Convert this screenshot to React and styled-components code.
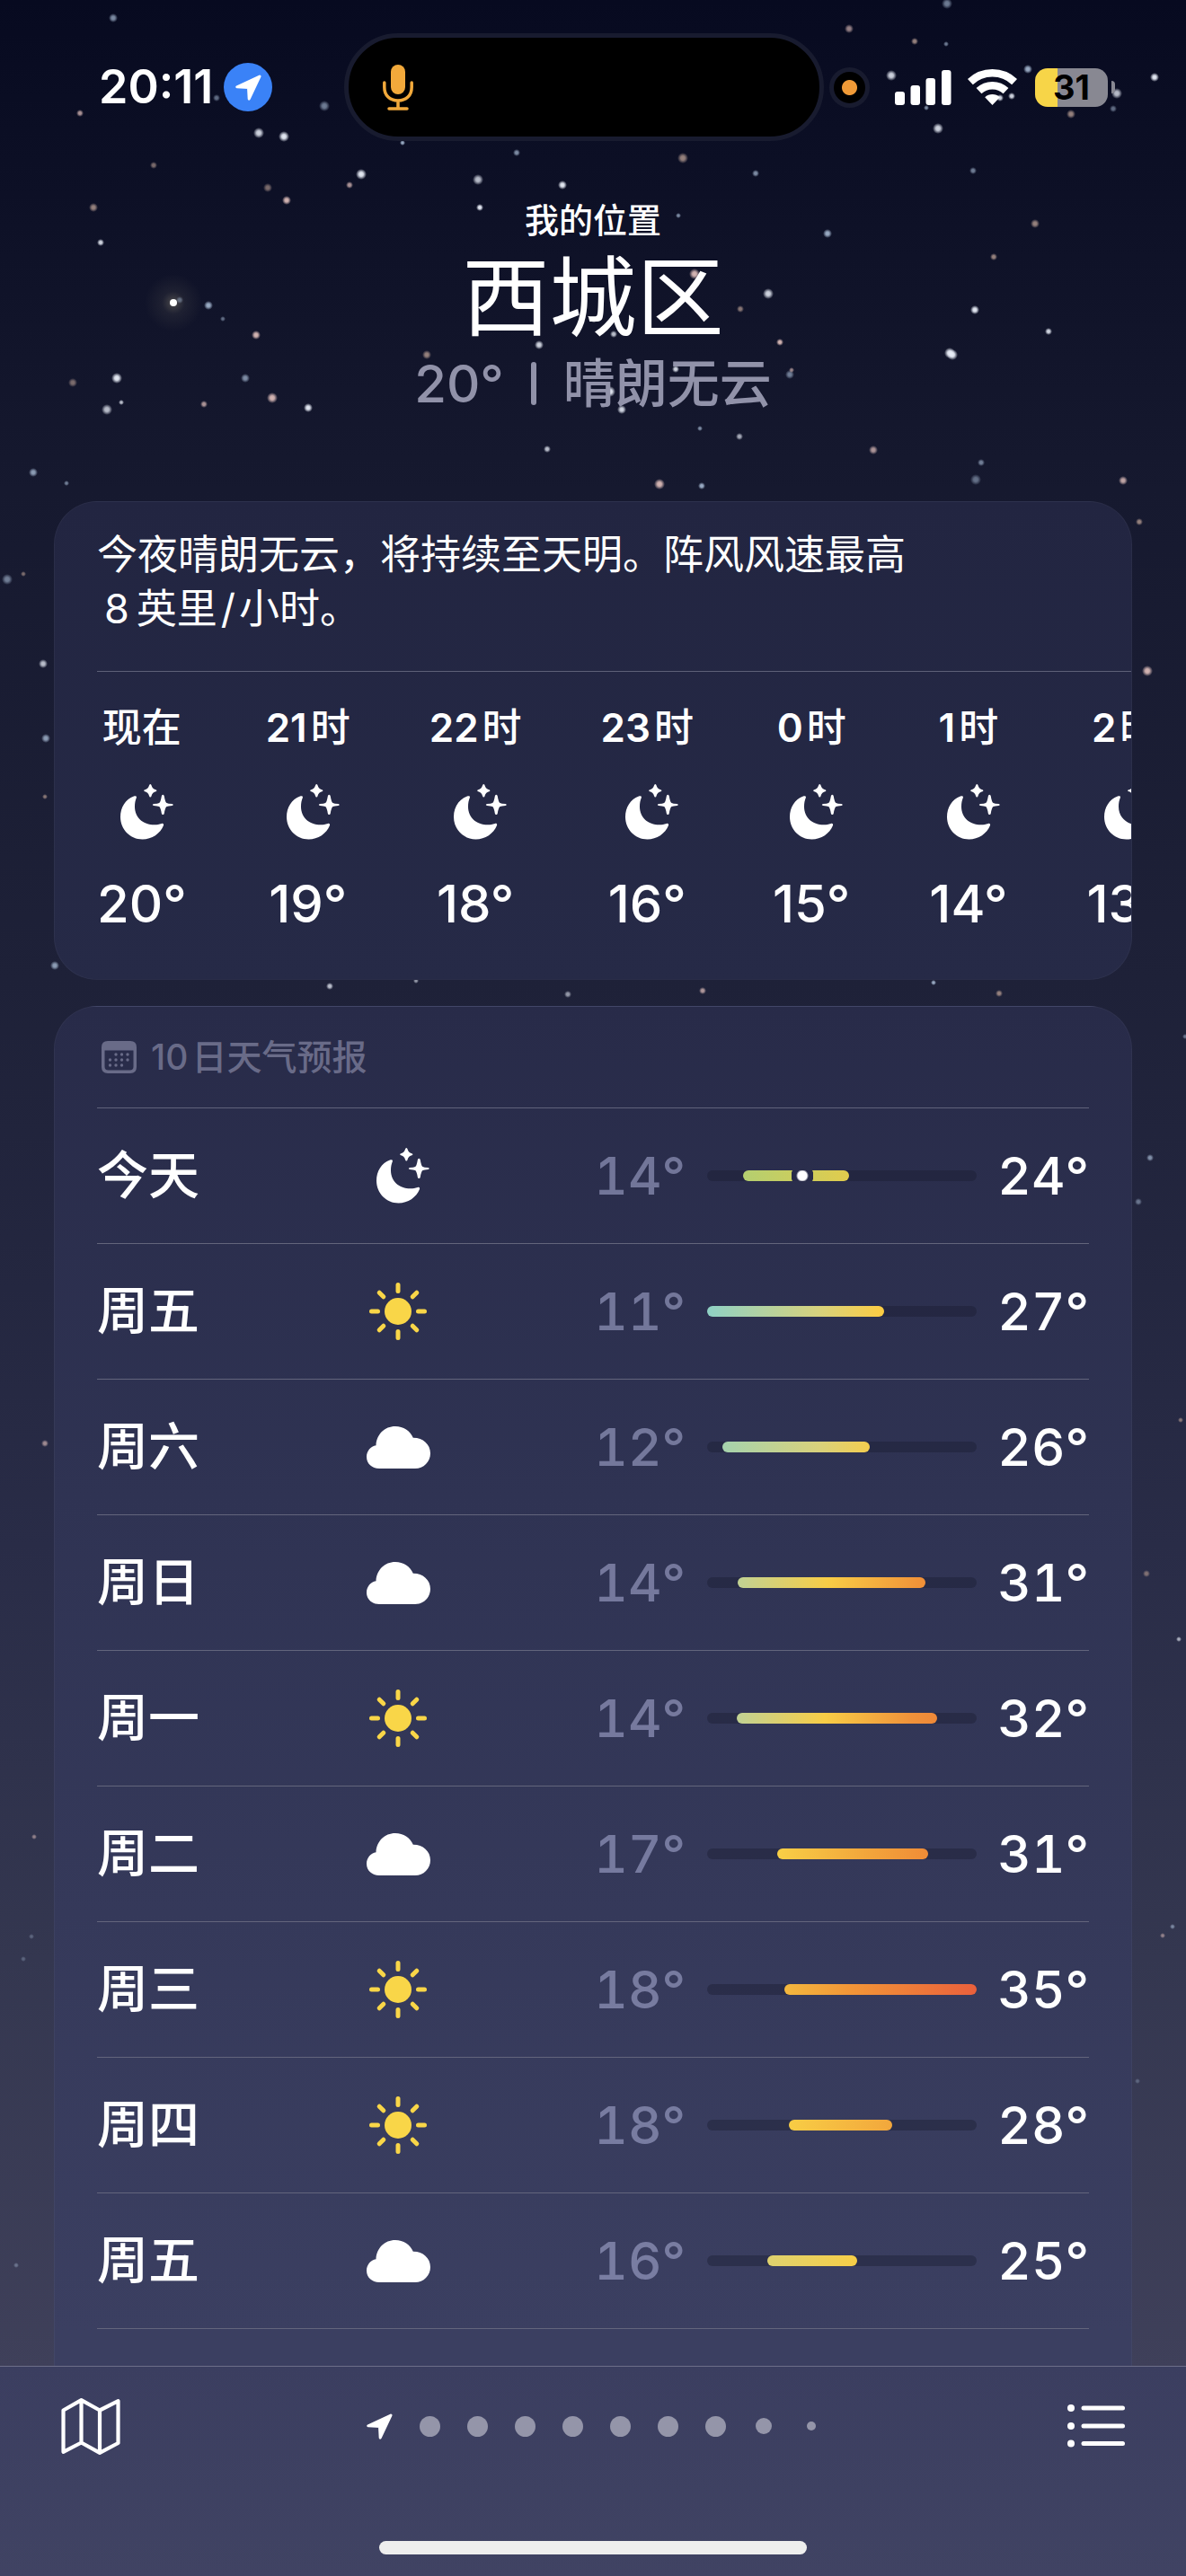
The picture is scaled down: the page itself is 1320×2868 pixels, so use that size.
import styled, { createGlobalStyle } from "styled-components";

const GlobalStyle = createGlobalStyle`
  * {
    box-sizing: border-box;
  }

  body {
    margin: 0;
    background-color: #0f1228;
    color: #ffffff;
    font-family: Inter, "Noto Sans CJK SC", sans-serif;
  }

  h1, h2, p, ul {
    margin: 0;
    padding: 0;
    font-weight: inherit;
    font-size: inherit;
  }

  ul {
    list-style: none;
  }

  svg {
    display: block;
  }
`;

const Screen = styled.div`
  position: relative;
  height: 100vh;
  display: flex;
  flex-direction: column;
  overflow: hidden;
  background: linear-gradient(
    #070a20 0%,
    #0f1228 10%,
    #16192f 19%,
    #1e2138 38%,
    #292c47 60%,
    #343750 76%,
    #3f405a 92%
  );
`;

const Sky = styled.svg`
  position: absolute;
  top: 0;
  left: 0;
  width: 100%;
  height: 100%;
`;

const StatusBar = styled.div`
  position: relative;
  display: grid;
  grid-template-columns: 273px 1fr 45px 273px;
  align-items: center;
  padding: 37px 79px 0 110px;
`;

const Clock = styled.div`
  display: flex;
  align-items: center;
  gap: 12px;
  font-size: 52px;
  line-height: 60px;
  font-weight: 600;
`;

const LocationBadge = styled.span`
  width: 54px;
  height: 54px;
  border-radius: 50%;
  background-color: #3a82f7;
  display: flex;
  align-items: center;
  justify-content: center;
`;

const Island = styled.div`
  height: 120px;
  margin-right: 6px;
  padding-left: 38px;
  border: 5px solid #181b2f;
  border-radius: 60px;
  background-color: #000000;
  display: flex;
  align-items: center;
`;

const MicDot = styled.div`
  width: 45px;
  height: 45px;
  border: 5px solid #181b2f;
  border-radius: 50%;
  background: radial-gradient(circle, #f09a37 8px, #000000 9px);
`;

const StatusIcons = styled.div`
  display: flex;
  align-items: center;
  justify-content: flex-end;
`;

const Battery = styled.div`
  width: 81px;
  height: 43px;
  margin: 0 4px 0 20px;
  border-radius: 14px;
  background: linear-gradient(90deg, #f7d548 31%, #888892 31%);
  color: #000000;
  font-size: 38px;
  line-height: 43px;
  font-weight: 700;
  text-align: center;
`;

const BatteryCap = styled.span`
  width: 4px;
  height: 14px;
  border-radius: 0 4px 4px 0;
  background-color: #888892;
`;

const Content = styled.main`
  position: relative;
  flex: 1;
  min-height: 0;
  overflow: hidden;
  padding: 0 60px;
`;

const Header = styled.header`
  padding: 64px 0 97px;
  text-align: center;
`;

const Place = styled.p`
  font-size: 38px;
  line-height: 48px;
  font-weight: 500;
`;

const City = styled.h1`
  font-size: 97px;
  line-height: 124px;
  font-weight: 400;
`;

const Current = styled.p`
  display: flex;
  align-items: center;
  justify-content: center;
  font-size: 58px;
  line-height: 68px;
  font-weight: 500;
  color: #9192a9;
`;

const Divider = styled.span`
  width: 6px;
  height: 48px;
  margin: 0 30px;
  border-radius: 3px;
  background-color: #9192a9;
`;

const Card = styled.section`
  border: 1px solid rgba(255, 255, 255, 0.04);
  border-radius: 48px;
  overflow: hidden;
`;

const HourlyCard = styled(Card)`
  padding-left: 47px;
  background: linear-gradient(#222541, #262a47);
`;

const DailyCard = styled(Card)`
  margin-top: 29px;
  padding: 0 47px 80px;
  border-radius: 48px 48px 0 0;
  background: linear-gradient(#282b49, #2f3353 35%, #3b3f61 95%);
`;

const Summary = styled.p`
  padding: 29px 230px 39px 0;
  border-bottom: 1px solid #5d6077;
  font-size: 45px;
  line-height: 60px;
`;

const Speed = styled.span`
  margin: 0 8px;
`;

const Slash = styled.span`
  margin: 0 4px;
`;

const Hours = styled.ul`
  display: flex;
  gap: 88px;
  padding: 32px 0 52px;
`;

const Hour = styled.li`
  flex: none;
  display: flex;
  flex-direction: column;
  align-items: center;
`;

const HourLabel = styled.span`
  display: flex;
  align-items: baseline;
  gap: 4px;
  height: 60px;
  font-size: 44px;
  line-height: 60px;
  font-weight: 600;
`;

const HourUnit = styled.span`
  font-weight: 500;
`;

const HourIcon = styled.span`
  padding: 33px 0 39px;
`;

const HourTemp = styled.span`
  font-size: 58px;
  line-height: 64px;
  font-weight: 500;
`;

const DailyTitle = styled.h2`
  display: flex;
  align-items: center;
  gap: 16px;
  height: 113px;
  padding-left: 5px;
  border-bottom: 1px solid #60627a;
  font-size: 39px;
  line-height: 48px;
  font-weight: 500;
  color: #696b88;
`;

const TitleText = styled.span`
  display: flex;
  align-items: baseline;
  gap: 4px;
  height: 48px;
`;

const Day = styled.li`
  display: grid;
  grid-template-columns: 299px 72px 1fr 300px 125px;
  align-items: center;
  height: 151px;
  border-bottom: 1px solid #63657c;
  font-weight: 500;
`;

const DayName = styled.span`
  font-size: 57px;
  line-height: 64px;
`;

const DayIcon = styled.span`
  display: flex;
  justify-content: center;
`;

const Temp = styled.span`
  font-size: 58px;
  line-height: 64px;
  font-variant-numeric: tabular-nums;
  text-align: right;
`;

const LowTemp = styled(Temp)`
  padding-right: 24px;
  color: rgba(176, 180, 218, 0.54);
`;

const Track = styled.div`
  position: relative;
  height: 12px;
  border-radius: 6px;
  background-color: rgba(25, 27, 48, 0.4);
`;

const Range = styled.div`
  height: 12px;
  border-radius: 6px;
  background: linear-gradient(90deg, ${({ $colors }) => $colors});
`;

const NowMark = styled.span`
  position: absolute;
  top: 0;
  width: 24px;
  height: 12px;
  margin-left: -12px;
  background: radial-gradient(circle, #ffffff 5px, #282b49 7px, #282b49 12px, transparent 13px);
`;

const Toolbar = styled.footer`
  position: relative;
  flex: none;
  border-top: 1px solid #6c6e88;
  background: linear-gradient(#3b3e60, #404363);
`;

const Tabs = styled.nav`
  display: flex;
  align-items: center;
  justify-content: space-between;
  height: 132px;
  padding: 0 68px;
`;

const IconButton = styled.button`
  padding: 0;
  border: 0;
  background: none;
  color: #ffffff;
  cursor: pointer;
`;

const Pages = styled.div`
  display: flex;
  align-items: center;
  gap: 30px;
`;

const PageSlot = styled.span`
  width: 23px;
  display: flex;
  justify-content: center;
`;

const PageDot = styled.span`
  width: ${({ $size }) => $size}px;
  height: ${({ $size }) => $size}px;
  border-radius: 50%;
  background-color: #9495a9;
`;

const HomeBar = styled.div`
  width: 36%;
  height: 15px;
  margin: 62px auto 24px;
  border-radius: 8px;
  background-color: #eeeeee;
`;

const white = "#e9eef8";
const blue = "#9dafc8";
const rose = "#d9b9b6";
const brown = "#9a8580";

// x, y, radius, colour, opacity
const stars = [
  [126, 20, 4, blue, 0.8], [89, 126, 3, rose, 0.8], [241, 109, 3, blue, 0.6], [361, 118, 5, blue, 0.7],
  [288, 148, 5, white, 0.9], [316, 152, 5, white, 1], [171, 184, 3, brown, 0.8], [402, 194, 5, white, 1],
  [389, 206, 3, rose, 0.8], [298, 209, 4, brown, 0.8], [319, 223, 4, rose, 1], [104, 231, 4, brown, 1],
  [112, 270, 3, white, 0.9], [200, 334, 3, blue, 0.5], [232, 340, 4, blue, 1], [248, 355, 2, blue, 0.6],
  [285, 373, 4, rose, 1], [475, 395, 4, brown, 1], [81, 426, 4, brown, 0.8], [130, 421, 5, white, 1],
  [119, 456, 5, white, 0.8], [135, 448, 2, white, 0.8], [227, 450, 3, rose, 0.8], [273, 421, 4, blue, 0.8],
  [303, 443, 5, rose, 1], [343, 454, 4, white, 1], [37, 526, 4, blue, 0.9], [74, 538, 2, blue, 0.7],
  [448, 159, 2, blue, 1], [575, 170, 3, blue, 0.8], [532, 200, 5, white, 0.8], [626, 206, 4, white, 1],
  [534, 231, 3, white, 1], [600, 384, 4, white, 0.9], [609, 500, 3, white, 0.8], [418, 46, 2, blue, 0.8],
  [1054, 4, 5, blue, 0.7], [945, 32, 4, rose, 0.7], [1018, 46, 3, brown, 1], [1053, 49, 2, blue, 0.7],
  [992, 84, 5, white, 0.9], [1144, 77, 4, blue, 1], [1126, 107, 3, white, 0.9], [1113, 109, 3, white, 0.9],
  [1031, 120, 2, blue, 0.8], [1285, 86, 4, white, 1], [1243, 104, 5, white, 0.8], [1239, 121, 3, blue, 0.6],
  [1192, 127, 4, brown, 1], [1044, 143, 5, white, 0.9], [760, 176, 5, brown, 1], [841, 193, 3, blue, 0.8],
  [1083, 190, 3, blue, 0.7], [755, 240, 2, blue, 0.8], [921, 260, 4, blue, 1], [1152, 249, 4, brown, 1],
  [1106, 286, 3, brown, 1], [773, 305, 5, rose, 1], [855, 327, 5, white, 0.9], [824, 344, 3, brown, 0.9],
  [1085, 345, 4, white, 1], [1167, 369, 3, white, 0.9], [868, 381, 3, rose, 1], [1057, 393, 5, white, 1],
  [1060, 395, 5, white, 1], [683, 372, 3, white, 0.8], [879, 417, 4, blue, 0.7], [881, 412, 2, rose, 0.7],
  [679, 436, 5, white, 1], [692, 456, 4, white, 0.9], [752, 411, 3, white, 0.9], [779, 477, 2, blue, 0.8],
  [823, 486, 3, white, 0.7], [972, 501, 4, rose, 0.8], [1092, 515, 3, blue, 0.7], [1086, 534, 5, blue, 0.6],
  [734, 539, 5, rose, 1], [781, 541, 3, blue, 1], [1250, 535, 4, rose, 0.9], [8, 645, 5, blue, 0.7],
  [26, 639, 2, brown, 0.8], [48, 739, 4, white, 0.8], [51, 822, 4, blue, 0.9], [50, 887, 2, brown, 0.9],
  [61, 1075, 4, blue, 0.9], [367, 1098, 3, white, 0.8], [463, 1092, 2, white, 0.6], [632, 1107, 3, white, 0.6],
  [1268, 581, 3, brown, 1], [1277, 747, 5, rose, 1], [782, 1103, 3, rose, 0.8], [1039, 1094, 2, blue, 1],
  [1112, 1106, 3, brown, 1], [50, 1607, 3, rose, 0.7], [1280, 1289, 3, blue, 0.8], [1267, 1338, 3, blue, 0.6],
  [1314, 1581, 2, brown, 0.9], [1319, 1154, 2, blue, 0.6], [1276, 1752, 3, brown, 0.8], [1312, 1825, 2, white, 0.7],
  [1305, 2145, 2, blue, 0.7], [1294, 2155, 2, rose, 0.6], [1266, 2317, 2, blue, 0.4], [18, 2522, 2, blue, 0.5],
  [38, 2045, 2, rose, 0.6], [35, 2156, 2, blue, 0.4], [26, 2181, 2, blue, 0.4],
];

const hours = [
  { label: "现在", temp: 20 },
  { number: 21, label: "时", temp: 19 },
  { number: 22, label: "时", temp: 18 },
  { number: 23, label: "时", temp: 16 },
  { number: 0, label: "时", temp: 15 },
  { number: 1, label: "时", temp: 14 },
  { number: 2, label: "时", temp: 13 },
];

// start, length and now are in hundredths of the track
const days = [
  { name: "今天", icon: "moon", low: 14, high: 24, start: 13.3, length: 39.3, now: 35.3, colors: "#b4cf70, #e1cc4d" },
  { name: "周五", icon: "sun", low: 11, high: 27, start: 0, length: 65.7, colors: "#8fd1c5, #d8d27c 64%, #fdcc42" },
  { name: "周六", icon: "cloud", low: 12, high: 26, start: 5.7, length: 54.7, colors: "#a5d3ae, #d9d17b 66%, #f3cd4f" },
  { name: "周日", icon: "cloud", low: 14, high: 31, start: 11.3, length: 69.7, colors: "#c1d294, #f8cd46 48%, #f18f37" },
  { name: "周一", icon: "sun", low: 14, high: 32, start: 11, length: 74.3, colors: "#c1d294, #f8cd46 44%, #f0933a 86%, #ef8838" },
  { name: "周二", icon: "cloud", low: 17, high: 31, start: 26, length: 56, colors: "#f8cf46, #f2a53b 60%, #f08c37" },
  { name: "周三", icon: "sun", low: 18, high: 35, start: 28.7, length: 71.3, colors: "#f4b83e, #f29537 35%, #ea603c" },
  { name: "周四", icon: "sun", low: 18, high: 28, start: 30.3, length: 38.3, colors: "#f8cd45, #f2a73c" },
  { name: "周五", icon: "cloud", low: 16, high: 25, start: 22.3, length: 33.3, colors: "#dfd26f, #f7ce47" },
];

const pageDots = [23, 23, 23, 23, 23, 23, 23, 18, 10];

// the moon hangs right of the middle, so the box keeps room on its left
function Moon() {
  return (
    <svg width="70" height="62" viewBox="-11 0 70 62" fill="#fff" aria-hidden="true">
      <path d="M15 13.500C5.500 17 0 26 0 36.500C0 50.500 11 61.500 24.500 61.500C35 61.500 44.500 55 48 46C48.600 44.300 47.300 43.500 45.800 44C43 45 41 45.300 38 45.300C25 45.300 16 37 16 25C16 21 16.600 18 17.800 15.200C18.400 13.400 17.300 12.600 15 13.500Z" />
      <path d="M33.300 0Q34.300 0 34.600 1.500Q35.500 5.500 40 6.500Q40.800 7.300 40 8.100Q35.500 9 34.600 13.100Q34.300 14.600 33.300 14.600Q32.300 14.600 32 13.100Q31 9 26.600 8.100Q25.800 7.300 26.600 6.500Q31 5.500 32 1.500Q32.300 0 33.300 0Z" />
      <path d="M47.300 11.800Q48.500 11.800 48.800 13.500Q49.800 20 51.500 21Q53 21.900 57.500 22.100Q58.800 22.400 58.800 23Q58.800 23.600 57.500 23.900Q53 24.200 51.500 25Q49.800 26 48.800 32.500Q48.500 34 47.300 34Q46.100 34 45.800 32.500Q44.800 26 43.100 25Q41.600 24.200 37.100 23.900Q35.800 23.600 35.800 23Q35.800 22.400 37.100 22.100Q41.600 21.900 43.100 21Q44.800 20 45.800 13.500Q46.100 11.800 47.300 11.800Z" />
    </svg>
  );
}

function Sun() {
  return (
    <svg width="64" height="64" viewBox="0 0 64 64" stroke="#f9d648" strokeWidth="5" strokeLinecap="round" aria-hidden="true">
      <circle cx="32" cy="32" r="15" fill="#f9d648" stroke="none" />
      <path d="M32 2.500V9.500M32 54.500V61.500M2.500 32H9.500M54.500 32H61.500M11.200 11.200L15.800 15.800M48.200 48.200L52.800 52.800M11.200 52.800L15.800 48.200M48.200 15.800L52.800 11.200" />
    </svg>
  );
}

function Cloud() {
  return (
    <svg width="71" height="47" viewBox="0 0 71 47" fill="#fff" aria-hidden="true">
      <path d="M14 47C6 47 0 41.500 0 34C0 27.500 4.500 22.500 10.500 21.300C11 9 20 0 32 0C41 0 48.500 5 51.800 12.800C62.500 12.600 71 20 71 30C71 39.500 63.500 47 54 47Z" />
    </svg>
  );
}

const icons = { moon: Moon, sun: Sun, cloud: Cloud };

function Arrow() {
  return (
    <svg width="29" height="29" viewBox="0 0 29 29" fill="#fff" stroke="#fff" strokeWidth="3" strokeLinejoin="round" aria-hidden="true">
      <path d="M27 2L1.800 13.800L14.500 14.500L15.200 27.200Z" />
    </svg>
  );
}

function Mic() {
  return (
    <svg width="34" height="51" viewBox="0 0 34 51" fill="none" stroke="#f2a93b" strokeWidth="3.500" strokeLinecap="round" aria-hidden="true">
      <rect x="9" y="0" width="16" height="33" rx="8" fill="#f2a93b" stroke="none" />
      <path d="M1.800 20V25C1.800 34.500 8 40 17 40S32.200 34.500 32.200 25V20M17 40V48M7 49H27" />
    </svg>
  );
}

function Signal() {
  return (
    <svg width="63" height="39" viewBox="0 0 63 39" fill="#fff" aria-hidden="true">
      <rect x="0" y="24" width="11" height="15" rx="3" />
      <rect x="17.500" y="17" width="10.500" height="22" rx="3" />
      <rect x="34.500" y="9" width="10.500" height="30" rx="3" />
      <rect x="52" y="0" width="10.500" height="39" rx="3" />
    </svg>
  );
}

const WifiIcon = styled.svg`
  margin-left: 18px;
`;

function Wifi() {
  return (
    <WifiIcon width="55" height="40" viewBox="0 0 55 40" fill="none" stroke="#fff" strokeWidth="8.500" aria-hidden="true">
      <path d="M2.900 14.100A35.750 35.750 0 0 1 52.100 14.100M12.500 24.200A21.750 21.750 0 0 1 42.500 24.200" />
      <path d="M27.500 40L19.200 31.300A12 12 0 0 1 35.800 31.300Z" fill="#fff" stroke="none" />
    </WifiIcon>
  );
}

function Calendar() {
  return (
    <svg width="39" height="36" viewBox="0 0 39 36" fill="currentColor" aria-hidden="true">
      <path fillRule="evenodd" d="M7 0H32Q39 0 39 7V29Q39 36 32 36H7Q0 36 0 29V7Q0 0 7 0ZM3.500 10.500V28.500Q3.500 32.500 7.500 32.500H31.500Q35.500 32.500 35.500 28.500V10.500Z" />
      {[[16, 15], [22.5, 15], [29, 15], [9.5, 21], [16, 21], [22.5, 21], [29, 21], [9.5, 27], [16, 27], [22.5, 27]].map(([x, y]) => (
        <circle key={`${x}-${y}`} cx={x} cy={y} r="1.700" />
      ))}
    </svg>
  );
}

function MapIcon() {
  return (
    <svg width="66" height="63" viewBox="0 0 66 63" fill="none" stroke="currentColor" strokeWidth="4.200" strokeLinejoin="round" aria-hidden="true">
      <path d="M2.500 13.500L22.500 2.200L43 13.500L63.500 3.200V50L43 60.800L22.500 49.500L2.500 59.800ZM22.500 2.200V49.500M43 13.500V60.800" />
    </svg>
  );
}

function ListIcon() {
  return (
    <svg width="64" height="48" viewBox="0 0 64 48" fill="currentColor" aria-hidden="true">
      {[4, 24, 43.5].map((y) => (
        <g key={y}>
          <circle cx="4" cy={y} r="4" />
          <rect x="15.500" y={y - 2.5} width="48.500" height="5" rx="2.500" />
        </g>
      ))}
    </svg>
  );
}

function NightSky() {
  return (
    <Sky viewBox="0 0 1320 2868" preserveAspectRatio="xMidYMin slice" aria-hidden="true">
      <defs>
        <radialGradient id="halo">
          <stop offset="0" stopColor="#8d8672" stopOpacity="0.5" />
          <stop offset="0.4" stopColor="#6d6a60" stopOpacity="0.15" />
          <stop offset="1" stopColor="#6d6a60" stopOpacity="0" />
        </radialGradient>
        {[white, blue, rose, brown].map((color) => (
          <radialGradient key={color} id={`star${color.slice(1)}`}>
            <stop offset="0" stopColor={color} />
            <stop offset="0.4" stopColor={color} stopOpacity="0.9" />
            <stop offset="1" stopColor={color} stopOpacity="0" />
          </radialGradient>
        ))}
      </defs>
      <circle cx="193" cy="337" r="32" fill="url(#halo)" />
      <circle cx="193" cy="337" r="4" fill="#ffffff" />
      {stars.map(([x, y, r, color, opacity]) => (
        <circle key={`${x}-${y}`} cx={x} cy={y} r={r + 1} fill={`url(#star${color.slice(1)})`} opacity={opacity} />
      ))}
    </Sky>
  );
}

function DayRow({ day }) {
  const Icon = icons[day.icon];

  return (
    <Day>
      <DayName>{day.name}</DayName>
      <DayIcon>
        <Icon />
      </DayIcon>
      <LowTemp>{day.low}°</LowTemp>
      <Track>
        <Range $colors={day.colors} style={{ marginLeft: `${day.start}%`, width: `${day.length}%` }} />
        {day.now && <NowMark style={{ left: `${day.now}%` }} />}
      </Track>
      <Temp>{day.high}°</Temp>
    </Day>
  );
}

function App() {
  return (
    <Screen>
      <GlobalStyle />
      <NightSky />

      <StatusBar>
        <Clock>
          20:11
          <LocationBadge>
            <Arrow />
          </LocationBadge>
        </Clock>
        <Island>
          <Mic />
        </Island>
        <MicDot />
        <StatusIcons>
          <Signal />
          <Wifi />
          <Battery>31</Battery>
          <BatteryCap />
        </StatusIcons>
      </StatusBar>

      <Content>
        <Header>
          <Place>我的位置</Place>
          <City>西城区</City>
          <Current>
            20°
            <Divider />
            晴朗无云
          </Current>
        </Header>

        <HourlyCard>
          <Summary>
            今夜晴朗无云，将持续至天明。阵风风速最高
            <Speed>8</Speed>英里<Slash>/</Slash>小时。
          </Summary>
          <Hours>
            {hours.map((hour) => (
              <Hour key={hour.temp}>
                <HourLabel>
                  {hour.number !== undefined && <span>{hour.number}</span>}
                  <HourUnit>{hour.label}</HourUnit>
                </HourLabel>
                <HourIcon>
                  <Moon />
                </HourIcon>
                <HourTemp>{hour.temp}°</HourTemp>
              </Hour>
            ))}
          </Hours>
        </HourlyCard>

        <DailyCard>
          <DailyTitle>
            <Calendar />
            <TitleText>
              <span>10</span>
              <span>日天气预报</span>
            </TitleText>
          </DailyTitle>
          <ul>
            {days.map((day, index) => (
              <DayRow key={index} day={day} />
            ))}
          </ul>
        </DailyCard>
      </Content>

      <Toolbar>
        <Tabs>
          <IconButton aria-label="地图">
            <MapIcon />
          </IconButton>
          <Pages>
            <Arrow />
            {pageDots.map((size, index) => (
              <PageSlot key={index}>
                <PageDot $size={size} />
              </PageSlot>
            ))}
          </Pages>
          <IconButton aria-label="列表">
            <ListIcon />
          </IconButton>
        </Tabs>
        <HomeBar />
      </Toolbar>
    </Screen>
  );
}

export default App;
